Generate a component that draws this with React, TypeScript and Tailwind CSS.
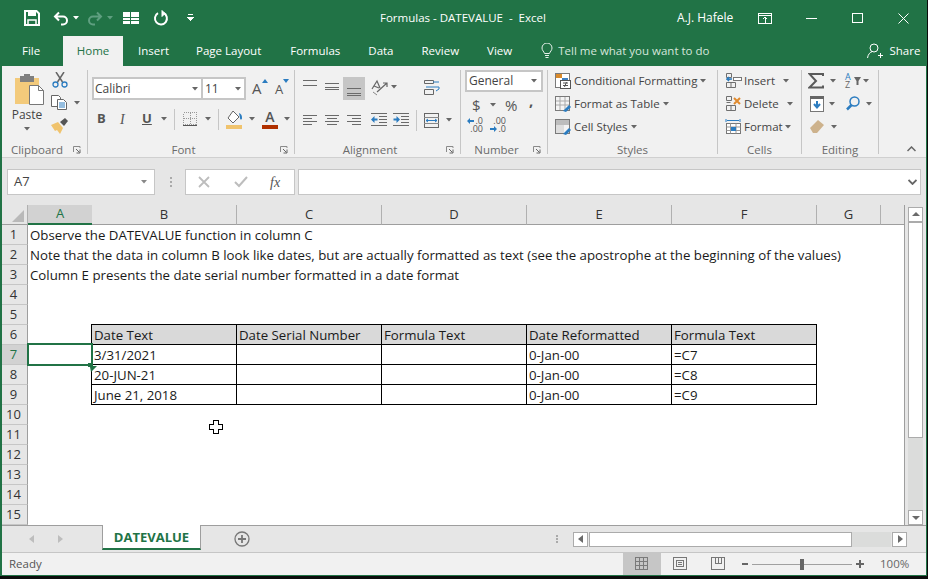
import React from "react";

const G = "#6a6a6a";

function Caret({ className = "", color = "#666" }: { className?: string; color?: string }) {
  return (
    <svg width="6" height="4" viewBox="0 0 6 4" className={"shrink-0 " + className}>
      <path d="M0 0h6L3 3.5z" fill={color} />
    </svg>
  );
}

function Launcher() {
  return (
    <svg width="8" height="8" viewBox="0 0 8 8" className="shrink-0">
      <path d="M0.5 6V0.5H7V2" stroke="#8a8a8a" fill="none" />
      <path d="M3 3l3.5 3.5M7 3.5V7H3.5" stroke="#666" fill="none" />
    </svg>
  );
}

function Group({ label, launcher, className, children }: { label: string; launcher?: boolean; className: string; children: React.ReactNode }) {
  return (
    <div className={"mt-[4px] h-[84px] shrink-0 border-r border-[#c6c6c6] " + className}>
      <div className="flex h-[68px] flex-col">{children}</div>
      <div className="flex h-[24px] items-center text-[11.5px] text-[#6b6b6b]">
        <span className="flex-1 text-center">{label}</span>
        {launcher && (
          <span className="flex w-[15px] justify-start pl-[1px]">
            <Launcher />
          </span>
        )}
      </div>
    </div>
  );
}

function Lines({ rows }: { rows: [number, number, number][] }) {
  return (
    <svg width="16" height="16" viewBox="0 0 16 16" className="shrink-0" shapeRendering="crispEdges">
      {rows.map(([y, a, b], i) => (
        <rect key={i} x={a} y={y} width={b - a} height="1" fill={G} />
      ))}
    </svg>
  );
}

function StyleIcon({ kind }: { kind: number }) {
  return (
    <svg width="16" height="16" viewBox="0 0 16 16" className="shrink-0">
      <rect x="0.5" y="0.5" width="14" height="14" fill={kind === 0 ? "#fff" : "#f4f4f4"} stroke="#7a7a7a" />
      {kind === 0 && (
        <>
          <rect x="1" y="1" width="6" height="4" fill="#d98a2b" />
          <rect x="7" y="5" width="6" height="4" fill="#3d7fc0" />
          <rect x="5.5" y="7.5" width="10" height="8" fill="#fff" stroke="#555" />
          <path d="M8 10h5M8 12.5h5M11.5 9l-2 5" stroke="#555" fill="none" />
        </>
      )}
      {kind === 1 && (
        <>
          <path d="M1 5h13M1 9h13M5 1v13M10 1v13" stroke="#aaa" />
          <path d="M8 15l6-6 2 2-5 5z" fill="#2b7cc0" />
        </>
      )}
      {kind === 2 && (
        <>
          <rect x="1" y="1" width="13" height="5" fill="#bdbdbd" />
          <rect x="1" y="6" width="8" height="8" fill="#dedede" />
          <path d="M8 15l6-6 2 2-5 5z" fill="#2b7cc0" />
        </>
      )}
    </svg>
  );
}

function CellIcon({ kind }: { kind: number }) {
  return (
    <svg width="17" height="17" viewBox="0 0 17 17" className="shrink-0">
      {kind !== 2 ? (
        <>
          <path d="M1.5 1.5h5v4h-5zM1.5 10.5h9v5h-9zM6 10.5v5M1.5 7.5h4" stroke="#6f6f6f" fill="none" />
          {kind === 0 ? (
            <>
              <rect x="8.5" y="5.5" width="8" height="3" fill="#fff" stroke="#777" />
              <path d="M7 7H2M4 5L2 7l2 2" stroke="#2b7cc0" strokeWidth="1.5" fill="none" />
            </>
          ) : (
            <path d="M9 3l6 6M15 3l-6 6" stroke="#e08a2e" strokeWidth="2" />
          )}
        </>
      ) : (
        <>
          <path d="M1 1v3M15 1v3M2 2.5h12" stroke="#2b7cc0" />
          <rect x="1.5" y="5.5" width="14" height="10" fill="#fff" stroke="#777" />
          <path d="M1.5 9h14M1.5 12.5h14M5.5 5.5v10M11 5.5v10" stroke="#999" />
          <rect x="6" y="9" width="5" height="4" fill="#2b7cc0" />
        </>
      )}
    </svg>
  );
}

function TableRow({ n, cells, head, active }: { n: number; cells: string[]; head?: boolean; active?: boolean }) {
  return (
    <div className="flex h-[20px]">
      <RowHead n={n} active={active} />
      <div className="h-[20px] w-[64px] shrink-0 border-r border-black" />
      {cells.map((c, i) => (
        <div
          key={i}
          className={
            "flex h-[20px] w-[145px] shrink-0 items-center whitespace-nowrap border-r border-b border-black pt-[2px] pl-[2px] " +
            (head ? "bg-[#d9d9d9]" : "")
          }
        >
          {c}
        </div>
      ))}
    </div>
  );
}

function RowHead({ n, active }: { n: number; active?: boolean }) {
  return (
    <div
      className={
        "flex h-[20px] w-[26px] shrink-0 items-center justify-center border-r border-b border-r-[#9e9e9e] border-b-[#c6c6c6] pt-[1px] pr-[2px] text-[13px] " +
        (active ? "bg-[#d2d2d2] text-[#217346]" : "bg-[#e6e6e6] text-[#333]")
      }
    >
      {n}
    </div>
  );
}

function ColHead({ label, className, active }: { label: string; className: string; active?: boolean }) {
  return (
    <div
      className={
        className +
        " flex h-[20px] shrink-0 items-center justify-center text-[13px] " +
        (active
          ? "border-b-2 border-b-[#217346] bg-[#d2d2d2] text-[#217346]"
          : "border-r border-b border-r-[#b0b0b0] border-b-[#9e9e9e] text-[#333]")
      }
    >
      {label}
    </div>
  );
}

function TextRow({ n, text }: { n: number; text?: string }) {
  return (
    <div className="flex h-[20px]">
      <RowHead n={n} />
      {text && <div className="flex items-center whitespace-nowrap pt-[2px] pl-[2px]">{text}</div>}
    </div>
  );
}

function ScrollBtn({ dir, className = "" }: { dir: "up" | "down" | "left" | "right"; className?: string }) {
  const d = { up: "M1 6L5 2l4 4z", down: "M1 3h8L5 7z", left: "M7 1v8L2 5z", right: "M3 1v8l5-4z" }[dir];
  return (
    <div className={"flex h-[15px] w-[15px] shrink-0 items-center justify-center border border-[#ababab] bg-white " + className}>
      <svg width="10" height="10" viewBox="0 0 10 10">
        <path d={d} fill="#6a6a6a" />
      </svg>
    </div>
  );
}

export default function App() {
  return (
    <div className="h-[579px] w-[928px] overflow-hidden bg-[#0c0c0c] pr-[1px] pb-[3px] font-['Open_Sans','Noto_Sans',sans-serif]">
      <div className="flex h-[576px] w-[927px] flex-col border-r border-b border-l-2 border-[#217346]">
        {/* Title bar */}
        <div className="flex h-[36px] shrink-0 items-center bg-[#217346] text-[12px] text-white">
          <svg width="16" height="16" viewBox="0 0 16 16" className="ml-[22px] shrink-0">
            <path d="M1 1h11.5L15 3.5V15H1z" fill="none" stroke="#fff" strokeWidth="2" />
            <rect x="4" y="1" width="8" height="5" fill="#fff" />
            <rect x="4" y="10" width="8" height="5" fill="none" stroke="#fff" strokeWidth="1.5" />
          </svg>
          <svg width="16" height="15" viewBox="0 0 16 15" className="ml-[13px] shrink-0">
            <path d="M6 1.5L2 5.5l4 4M2 5.5h8a4 4 0 0 1 0 8H8" fill="none" stroke="#fff" strokeWidth="2" />
          </svg>
          <Caret color="#fff" className="ml-[4px]" />
          <svg width="16" height="15" viewBox="0 0 16 15" className="ml-[8px] shrink-0">
            <path d="M10 1.5l4 4-4 4M14 5.5H6a4 4 0 0 0 0 8h2" fill="none" stroke="#5f9f80" strokeWidth="2" />
          </svg>
          <Caret color="#5f9f80" className="ml-[4px]" />
          <svg width="16" height="12" viewBox="0 0 16 12" className="ml-[10px] shrink-0" shapeRendering="crispEdges">
            <rect x="0" y="0" width="7" height="5" fill="#fff" />
            <rect x="8" y="0" width="8" height="5" fill="#fff" />
            <rect x="0" y="6" width="7" height="6" fill="#fff" />
            <rect x="8" y="6" width="8" height="6" fill="#fff" />
            <rect x="0" y="8" width="7" height="1" fill="#217346" />
            <rect x="8" y="8" width="8" height="1" fill="#217346" />
          </svg>
          <svg width="16" height="16" viewBox="0 0 16 16" className="ml-[14px] shrink-0">
            <path d="M5 3.2A6 6 0 1 0 10.5 3" fill="none" stroke="#fff" strokeWidth="2" />
            <path d="M9 0.5v6l3-3z" fill="#fff" stroke="#fff" />
          </svg>
          <svg width="7" height="8" viewBox="0 0 7 8" className="ml-[18px] shrink-0" shapeRendering="crispEdges">
            <rect x="1" y="0" width="5" height="1" fill="#fff" />
            <path d="M0 3h7L3.5 7z" fill="#fff" />
          </svg>
          <div className="ml-[186px] w-[165px] shrink-0 whitespace-pre text-[11.5px]">Formulas - DATEVALUE  -  Excel</div>
          <div className="ml-[132px] w-[56px] shrink-0 whitespace-nowrap">A.J. Hafele</div>
          <svg width="14" height="11" viewBox="0 0 14 11" className="ml-[25px] shrink-0" shapeRendering="crispEdges">
            <rect x="0.5" y="0.5" width="13" height="10" fill="none" stroke="#fff" />
            <rect x="1" y="2" width="12" height="1" fill="#fff" />
            <path d="M7 4v6M5 6l2-2 2 2" stroke="#fff" fill="none" />
          </svg>
          <div className="ml-[34px] h-px w-[11px] shrink-0 bg-white" />
          <div className="ml-[35px] h-[10px] w-[11px] shrink-0 border border-white" />
          <svg width="11" height="11" viewBox="0 0 11 11" className="ml-[35px] shrink-0">
            <path d="M0.5 0.5l10 10M10.5 0.5l-10 10" stroke="#fff" fill="none" />
          </svg>
        </div>

        {/* Tabs */}
        <div className="flex h-[30px] shrink-0 items-stretch whitespace-nowrap bg-[#217346] text-[11.5px] text-white">
          <div className="ml-[20px] flex w-[18px] shrink-0 items-center">File</div>
          <div className="ml-[23px] flex w-[60px] shrink-0 items-center justify-center bg-[#f1f1f1] text-[#217346]">Home</div>
          <div className="ml-[15px] flex shrink-0 items-center">Insert</div>
          <div className="ml-[27px] flex shrink-0 items-center">Page Layout</div>
          <div className="ml-[29px] flex shrink-0 items-center">Formulas</div>
          <div className="ml-[28px] flex shrink-0 items-center">Data</div>
          <div className="ml-[28px] flex shrink-0 items-center">Review</div>
          <div className="ml-[28px] flex shrink-0 items-center">View</div>
          <svg width="12" height="16" viewBox="0 0 12 16" className="ml-[29px] shrink-0 self-center">
            <path d="M3.5 10.5C3 8.5 1 7.5 1 5a5 5 0 0 1 10 0c0 2.500-2 3.500-2.500 5.500zM4 12.500h4M4.500 14.500h3" fill="none" stroke="#e6f0ea" />
          </svg>
          <div className="ml-[5px] flex shrink-0 items-center text-[#d5e6dc]">Tell me what you want to do</div>
          <svg width="16" height="16" viewBox="0 0 16 16" className="ml-[158px] shrink-0 self-center">
            <circle cx="7" cy="5" r="4" fill="none" stroke="#fff" />
            <path d="M0.500 15c.5-3.500 2.500-6 5-6.500M11 12.500h5M13.500 10v5" fill="none" stroke="#fff" />
          </svg>
          <div className="ml-[6px] flex shrink-0 items-center">Share</div>
        </div>

        {/* Ribbon */}
        <div className="flex h-[92px] shrink-0 border-b border-[#d0d0d0] bg-[#f1f1f1] text-[11.5px] text-[#444]">
          <Group label="Clipboard" launcher className="w-[86px]">
            <div className="flex">
              <div className="ml-[13px] flex w-[28px] flex-col items-center">
                <svg width="29" height="31" viewBox="0 0 29 31" className="mt-[4px] shrink-0">
                  <rect x="0" y="4" width="24" height="26" fill="#f3ca7b" />
                  <rect x="5" y="2" width="14" height="6" fill="#7f7f7f" />
                  <rect x="9" y="0" width="6" height="3" fill="#7f7f7f" />
                  <path d="M14.500 11.500h9l5 5v14h-14z" fill="#fff" stroke="#777" />
                  <path d="M23.500 11.500v5h5" fill="none" stroke="#777" />
                </svg>
                <span className="mt-[2px] mr-[4px] text-[12px] leading-[16px]">Paste</span>
                <Caret className="mt-[4px] mr-[4px]" />
              </div>
              <div className="ml-[8px] flex flex-col">
                <svg width="16" height="16" viewBox="0 0 16 16" className="mt-[2px] ml-[1px]">
                  <path d="M4 0l6.500 10M12 0L5.500 10" stroke="#666" strokeWidth="1.500" fill="none" />
                  <circle cx="3.500" cy="12.500" r="2.500" fill="none" stroke="#2b7cc0" strokeWidth="1.300" />
                  <circle cx="12.500" cy="12.500" r="2.500" fill="none" stroke="#2b7cc0" strokeWidth="1.300" />
                </svg>
                <div className="mt-[7px] flex items-center">
                  <svg width="16" height="15" viewBox="0 0 16 15">
                    <path d="M0.500 0.500h7l2 2v9h-9z" fill="#fff" stroke="#666" />
                    <path d="M6.500 4.500h6l3 3v7h-9z" fill="#fff" stroke="#666" />
                    <path d="M8 8h6M8 10h6M8 12h6" stroke="#2b7cc0" />
                  </svg>
                  <Caret className="ml-[7px]" />
                </div>
                <svg width="17" height="16" viewBox="0 0 17 16" className="mt-[8px]">
                  <path d="M0 7l7-3 5 6-3 6-3-4-2 1z" fill="#f0c36d" />
                  <path d="M9 4l5-4 3 3-4 5z" fill="#555" />
                </svg>
              </div>
            </div>
          </Group>

          <Group label="Font" launcher className="w-[207px]">
            <div className="mt-[7px] flex h-[23px] items-center">
              <div className="ml-[4px] flex h-[23px] w-[111px] items-center border-2 border-[#c6c6c6] bg-white pl-[1px] text-[12px]">
                <span className="flex-1">Calibri</span>
                <Caret className="mr-[3px]" />
              </div>
              <div className="flex h-[23px] w-[43px] items-center border-2 border-l-0 border-[#c6c6c6] bg-white pl-[2px] text-[12px]">
                <span className="flex-1">11</span>
                <Caret className="mr-[3px]" />
              </div>
              <div className="relative ml-[6px] w-[14px] text-[15px] leading-none text-[#555]">
                A
                <svg width="6" height="4" viewBox="0 0 6 4" className="absolute -top-[2px] -right-[2px]">
                  <path d="M0 4h6L3 0z" fill="#2b7cc0" />
                </svg>
              </div>
              <div className="relative ml-[9px] mt-[2px] w-[12px] text-[13px] leading-none text-[#555]">
                A
                <svg width="6" height="4" viewBox="0 0 6 4" className="absolute -top-[4px] -right-[2px]">
                  <path d="M0 0h6L3 4z" fill="#2b7cc0" />
                </svg>
              </div>
            </div>
            <div className="mt-[8px] flex h-[22px] items-center">
              <span className="ml-[9px] w-[10px] text-[13px] font-bold text-[#555]">B</span>
              <span className="ml-[13px] w-[9px] font-['Liberation_Serif',serif] text-[14px] italic text-[#555]">I</span>
              <span className="ml-[13px] w-[10px] text-[13px] font-bold text-[#555] underline">U</span>
              <Caret className="ml-[9px]" />
              <div className="ml-[7px] h-[21px] w-px bg-[#c6c6c6]" />
              <svg width="14" height="14" viewBox="0 0 14 14" className="ml-[8px]" shapeRendering="crispEdges">
                <path d="M0.500 0.500h13v12h-13zM7 0.500v12M0.500 6.500h13" fill="none" stroke="#999" strokeDasharray="1 1" />
                <path d="M0 13h14" stroke="#555" />
              </svg>
              <Caret className="ml-[8px]" />
              <div className="ml-[7px] h-[21px] w-px bg-[#c6c6c6]" />
              <svg width="17" height="19" viewBox="0 0 17 19" className="ml-[7px]">
                <path d="M7 1l6 6-6 6-5-5z" fill="#fff" stroke="#666" />
                <path d="M13 3c2 1 3 2 3 5 0 2-2 2-2 0z" fill="#2b7cc0" />
                <rect x="0" y="15" width="16" height="4" fill="#f0c36d" />
              </svg>
              <Caret className="ml-[6px]" />
              <div className="ml-[7px] flex w-[16px] flex-col items-center">
                <span className="text-[14px] font-semibold leading-[14px] text-[#555]">A</span>
                <div className="mt-[1px] h-[4px] w-[16px] bg-[#b03000]" />
              </div>
              <Caret className="ml-[6px]" />
            </div>
          </Group>

          <Group label="Alignment" launcher className="w-[166px]">
            <div className="flex h-[38px] items-start">
              <div className="ml-[8px] mt-[9px]"><Lines rows={[[1, 0, 14], [6, 0, 14]]} /></div>
              <div className="ml-[6px] mt-[9px]"><Lines rows={[[4, 0, 14], [8, 0, 14], [10, 0, 14]]} /></div>
              <div className="ml-[2px] mt-[7px] flex h-[23px] w-[22px] items-center justify-center bg-[#c6c6c6]">
                <div className="mt-[3px]"><Lines rows={[[6, 1, 15], [11, 1, 15], [13, 1, 15]]} /></div>
              </div>
              <svg width="18" height="17" viewBox="0 0 18 17" className="ml-[6px] mt-[9px]">
                <path d="M1 10l5-8 3 7M3 7l5 2M6 13l10-9M12 4h4v4" fill="none" stroke="#666" strokeWidth="1.200" />
                <path d="M2 13l4 3" stroke="#888" />
              </svg>
              <Caret className="ml-[2px] mt-[15px]" />
              <svg width="16" height="16" viewBox="0 0 16 16" className="ml-[27px] mt-[10px]">
                <path d="M0.500 0.500h9v3h-9zM0.500 9.500h9v5h-9z" fill="none" stroke="#666" />
                <path d="M9 2h6M2 7h13v2l-3 2" stroke="#2b7cc0" fill="none" />
              </svg>
            </div>
            <div className="flex h-[24px] items-center">
              <div className="ml-[8px]"><Lines rows={[[3, 0, 14], [6, 0, 9], [9, 0, 14], [12, 0, 9]]} /></div>
              <div className="ml-[6px]"><Lines rows={[[3, 0, 14], [6, 2, 12], [9, 0, 14], [12, 2, 12]]} /></div>
              <div className="ml-[6px]"><Lines rows={[[3, 0, 14], [6, 5, 14], [9, 0, 14], [12, 5, 14]]} /></div>
              <svg width="16" height="14" viewBox="0 0 16 14" className="ml-[8px]" shapeRendering="crispEdges">
                <path d="M0 0.500h16M8 3.500h8M8 6.500h8M8 9.500h8M0 12.500h16" stroke={G} />
                <path d="M0 6.500l3.500-3.500v2.500h3v2h-3v2.500z" fill="#2b7cc0" shapeRendering="auto" />
              </svg>
              <svg width="16" height="14" viewBox="0 0 16 14" className="ml-[6px]" shapeRendering="crispEdges">
                <path d="M0 0.500h16M8 3.500h8M8 6.500h8M8 9.500h8M0 12.500h16" stroke={G} />
                <path d="M7 6.500l-3.500-3.500v2.500h-3v2h3v2.500z" fill="#2b7cc0" shapeRendering="auto" />
              </svg>
              <div className="ml-[7px] h-[21px] w-px bg-[#c6c6c6]" />
              <svg width="15" height="15" viewBox="0 0 15 15" className="ml-[7px]">
                <rect x="0.500" y="0.500" width="14" height="14" fill="none" stroke="#666" />
                <path d="M0 4.500h15M0 10.500h15" stroke="#888" />
                <path d="M2 7.500h11M4 6L2 7.500 4 9M11 6l2 1.500L11 9" stroke="#2b7cc0" fill="none" />
              </svg>
              <Caret className="ml-[7px]" />
            </div>
          </Group>

          <Group label="Number" launcher className="w-[87px]">
            <div className="ml-[4px] flex h-[22px] w-[78px] shrink-0 items-center border-2 border-[#c6c6c6] bg-white pl-[2px] text-[12px]">
              <span className="flex-1">General</span>
              <Caret className="mr-[4px]" />
            </div>
            <div className="mt-[3px] flex h-[20px] items-center text-[15px] text-[#555]">
              <span className="ml-[11px] w-[9px] leading-none">$</span>
              <Caret className="ml-[9px]" />
              <span className="ml-[9px] w-[15px] leading-none">%</span>
              <span className="ml-[9px] mb-[10px] text-[15px] font-bold leading-none">,</span>
            </div>
            <div className="mt-[1px] flex h-[18px] items-center">
              <div className="ml-[6px] flex w-[16px] flex-col text-[9px] leading-[8px] text-[#555]">
                <span className="flex items-center justify-end gap-px">
                  <svg width="7" height="6" viewBox="0 0 7 6"><path d="M0 3l3-3v2h4v2H3v2z" fill="#2b7cc0" /></svg>.0
                </span>
                <span className="text-right">.00</span>
              </div>
              <div className="ml-[7px] flex w-[16px] flex-col text-[9px] leading-[8px] text-[#555]">
                <span className="text-right">.00</span>
                <span className="flex items-center justify-end gap-px">
                  <svg width="7" height="6" viewBox="0 0 7 6"><path d="M7 3L4 0v2H0v2h4v2z" fill="#2b7cc0" /></svg>.0
                </span>
              </div>
            </div>
          </Group>

          <Group label="Styles" className="w-[170px]">
            <div className="ml-[7px] -mt-[1px] flex h-[23px] shrink-0 items-center whitespace-nowrap">
              <StyleIcon kind={0} />
              <span className="ml-[3px]">Conditional Formatting</span>
              <Caret className="ml-[3px]" />
            </div>
            <div className="ml-[7px] flex h-[23px] shrink-0 items-center whitespace-nowrap">
              <StyleIcon kind={1} />
              <span className="ml-[3px]">Format as Table</span>
              <Caret className="ml-[3px]" />
            </div>
            <div className="ml-[7px] flex h-[23px] shrink-0 items-center whitespace-nowrap">
              <StyleIcon kind={2} />
              <span className="ml-[3px]">Cell Styles</span>
              <Caret className="ml-[3px]" />
            </div>
          </Group>

          <Group label="Cells" className="w-[84px]">
            <div className="ml-[7px] -mt-[1px] flex h-[23px] shrink-0 items-center whitespace-nowrap">
              <CellIcon kind={0} />
              <span className="ml-[2px] w-[39px]">Insert</span>
              <Caret />
            </div>
            <div className="ml-[7px] flex h-[23px] shrink-0 items-center whitespace-nowrap">
              <CellIcon kind={1} />
              <span className="ml-[2px] w-[43px]">Delete</span>
              <Caret />
            </div>
            <div className="ml-[7px] flex h-[23px] shrink-0 items-center whitespace-nowrap">
              <CellIcon kind={2} />
              <span className="ml-[2px] w-[41px]">Format</span>
              <Caret />
            </div>
          </Group>

          <Group label="Editing" className="w-[77px]">
            <div className="-mt-[1px] flex h-[23px] shrink-0 items-center">
              <svg width="16" height="16" viewBox="0 0 16 16" className="ml-[6px]">
                <path d="M15 3V1H1.500l6.500 7-6.500 6.500H15v-2" fill="none" stroke="#5a5a5a" strokeWidth="2" />
              </svg>
              <Caret className="ml-[6px]" />
              <div className="ml-[9px] flex w-[13px] flex-col text-[9px] leading-[8px]">
                <span className="text-[#2b7cc0]">A</span>
                <span className="text-[#666]">Z</span>
              </div>
              <svg width="7" height="8" viewBox="0 0 7 8" className="-ml-[4px]"><path d="M0 0h7L4.500 4v4h-2V4z" fill="#666" /></svg>
              <Caret className="ml-[2px]" />
            </div>
            <div className="flex h-[23px] shrink-0 items-center">
              <svg width="14" height="16" viewBox="0 0 14 16" className="ml-[8px]">
                <rect x="0.500" y="0.500" width="13" height="15" fill="#fff" stroke="#777" />
                <rect x="0" y="0" width="14" height="3" fill="#666" />
                <path d="M7 5v6M4 8l3 3.500L10 8" fill="none" stroke="#2b7cc0" strokeWidth="2" />
              </svg>
              <Caret className="ml-[5px]" />
              <svg width="14" height="15" viewBox="0 0 14 15" className="ml-[11px]">
                <circle cx="8.500" cy="5.500" r="4.500" fill="none" stroke="#2b7cc0" strokeWidth="1.500" />
                <path d="M5.500 9L1 13.500" stroke="#2b7cc0" strokeWidth="2.500" />
              </svg>
              <Caret className="ml-[6px]" />
            </div>
            <div className="flex h-[23px] shrink-0 items-center">
              <svg width="14" height="13" viewBox="0 0 14 13" className="ml-[8px]">
                <path d="M0 8l8-8 6 5-7 8H3z" fill="#cdb28c" />
              </svg>
              <Caret className="ml-[7px]" />
            </div>
          </Group>

          <div className="flex flex-1 items-end justify-end pr-[10px] pb-[5px]">
            <svg width="9" height="6" viewBox="0 0 9 6">
              <path d="M0.500 5L4.500 1l4 4" fill="none" stroke="#666" strokeWidth="1.500" />
            </svg>
          </div>
        </div>

        {/* Formula bar */}
        <div className="flex h-[47px] shrink-0 items-center bg-[#e6e6e6] pt-[1px] text-[13px] text-[#444]">
          <div className="ml-[5px] flex h-[26px] w-[148px] items-center border border-[#c6c6c6] bg-white pl-[6px]">
            <span className="flex-1">A7</span>
            <Caret className="mr-[7px]" color="#888" />
          </div>
          <div className="ml-[15px] flex flex-col gap-[2px]">
            <div className="h-[2px] w-[2px] bg-[#aaa]" />
            <div className="h-[2px] w-[2px] bg-[#aaa]" />
            <div className="h-[2px] w-[2px] bg-[#aaa]" />
          </div>
          <div className="ml-[13px] flex h-[26px] w-[110px] items-center border border-[#c6c6c6] bg-white">
            <svg width="12" height="12" viewBox="0 0 12 12" className="ml-[12px]">
              <path d="M1 1l10 10M11 1L1 11" stroke="#bdbdbd" strokeWidth="1.800" />
            </svg>
            <svg width="14" height="12" viewBox="0 0 14 12" className="ml-[24px]">
              <path d="M1 6l4 4 8-9" fill="none" stroke="#bdbdbd" strokeWidth="2" />
            </svg>
            <span className="ml-[22px] font-['Liberation_Serif',serif] text-[14px] italic text-[#555]">fx</span>
          </div>
          <div className="ml-[3px] flex h-[26px] w-[623px] items-center justify-end border border-[#c6c6c6] bg-white pr-[3px]">
            <svg width="9" height="6" viewBox="0 0 9 6">
              <path d="M0.500 1L4.500 5l4-4" fill="none" stroke="#666" strokeWidth="1.800" />
            </svg>
          </div>
        </div>

        {/* Sheet */}
        <div className="flex h-[320px] shrink-0 bg-[#e6e6e6]">
          <div className="w-[903px] shrink-0">
            <div className="flex h-[20px]">
              <div className="flex h-[20px] w-[26px] shrink-0 items-end justify-end border-r border-b border-r-[#b0b0b0] border-b-[#9e9e9e] pr-[3px] pb-[2px]">
                <svg width="12" height="12" viewBox="0 0 12 12"><path d="M12 0v12H0z" fill="#b9b9b9" /></svg>
              </div>
              <ColHead label="A" active className="w-[64px]" />
              <ColHead label="B" className="w-[145px]" />
              <ColHead label="C" className="w-[145px]" />
              <ColHead label="D" className="w-[145px]" />
              <ColHead label="E" className="w-[145px]" />
              <ColHead label="F" className="w-[145px]" />
              <ColHead label="G" className="w-[64px]" />
              <div className="h-[20px] flex-1 border-r border-b border-r-[#9e9e9e] border-b-[#9e9e9e]" />
            </div>
            <div className="relative h-[300px] overflow-hidden border-r border-[#9e9e9e] bg-white text-[13.25px] text-[#1a1a1a]">
              <TextRow n={1} text="Observe the DATEVALUE function in column C" />
              <TextRow n={2} text="Note that the data in column B look like dates, but are actually formatted as text (see the apostrophe at the beginning of the values)" />
              <TextRow n={3} text="Column E presents the date serial number formatted in a date format" />
              <TextRow n={4} />
              <div className="flex h-[20px]">
                <RowHead n={5} />
                <div className="ml-[63px] h-[20px] w-[726px] border-b border-black" />
              </div>
              <TableRow n={6} head cells={["Date Text", "Date Serial Number", "Formula Text", "Date Reformatted", "Formula Text"]} />
              <TableRow n={7} active cells={["3/31/2021", "", "", "0-Jan-00", "=C7"]} />
              <TableRow n={8} cells={["20-JUN-21", "", "", "0-Jan-00", "=C8"]} />
              <TableRow n={9} cells={["June 21, 2018", "", "", "0-Jan-00", "=C9"]} />
              <TextRow n={10} />
              <TextRow n={11} />
              <TextRow n={12} />
              <TextRow n={13} />
              <TextRow n={14} />
              <TextRow n={15} />
              {/* active-cell selection */}
              <div className="absolute top-[118px] left-[25px] h-[23px] w-[66px] border-2 border-[#217346]" />
              <svg width="10" height="10" viewBox="0 0 10 10" className="absolute top-[138px] left-[86px]">
                <path d="M0 0h5v3h4L3 9 2 4H0z" fill="#217346" />
              </svg>
              {/* mouse pointer */}
              <svg width="14" height="14" viewBox="0 0 14 14" className="absolute top-[195px] left-[207px]" shapeRendering="crispEdges">
                <path d="M4.500 0.500h5v4h4v5h-4v4h-5v-4h-4v-5h4z" fill="#fff" stroke="#000" />
              </svg>
            </div>
          </div>
          <div className="flex w-[21px] shrink-0 flex-col pt-[2px] pl-[3px]">
            <ScrollBtn dir="up" />
            <div className="flex w-[15px] flex-1 flex-col bg-[#dbdcdb]">
              <div className="h-[216px] border border-[#ababab] bg-white" />
            </div>
            <ScrollBtn dir="down" />
          </div>
        </div>

        {/* Sheet tabs */}
        <div className="flex h-[28px] shrink-0 items-start border-b border-[#c6c6c6] bg-[#e6e6e6]">
          <div className="flex h-[27px] w-[100px] shrink-0 items-center border-t border-[#9e9e9e]">
            <svg width="5" height="8" viewBox="0 0 5 8" className="ml-[27px]"><path d="M5 0v8L0 4z" fill="#bdbdbd" /></svg>
            <svg width="5" height="8" viewBox="0 0 5 8" className="ml-[24px]"><path d="M0 0v8l5-4z" fill="#bdbdbd" /></svg>
          </div>
          <div className="flex h-[25px] w-[99px] shrink-0 items-center justify-center border-r border-l border-[#9e9e9e] border-b-2 border-b-[#217346] bg-white pt-[2px] text-[13px] font-bold text-[#217346]">
            DATEVALUE
          </div>
          <div className="flex h-[27px] flex-1 items-center border-t border-[#9e9e9e]">
            <svg width="16" height="16" viewBox="0 0 16 16" className="ml-[33px] shrink-0">
              <circle cx="8" cy="8" r="7" fill="none" stroke="#777" strokeWidth="1.300" />
              <path d="M8 4v8M4 8h8" stroke="#777" strokeWidth="1.800" />
            </svg>
            <div className="ml-[306px] flex flex-col gap-[1px]">
              <div className="h-[2px] w-[2px] bg-[#aaa]" />
              <div className="h-[2px] w-[2px] bg-[#aaa]" />
              <div className="h-[2px] w-[2px] bg-[#aaa]" />
            </div>
            <ScrollBtn dir="left" className="ml-[15px]" />
            <div className="ml-px flex h-[15px] w-[302px] bg-[#dbdcdb]">
              <div className="h-[15px] w-[263px] border border-[#ababab] bg-white" />
            </div>
            <ScrollBtn dir="right" className="ml-px" />
          </div>
        </div>

        {/* Status bar */}
        <div className="flex h-[22px] flex-1 items-stretch bg-[#f1f1f1] text-[11.5px] text-[#555]">
          <span className="ml-[7px] flex w-[40px] shrink-0 items-center">Ready</span>
          <div className="ml-[574px] flex w-[38px] shrink-0 items-center justify-center bg-[#c6c6c6]">
            <svg width="14" height="14" viewBox="0 0 14 14" shapeRendering="crispEdges">
              <path d="M0.500 0.500h12v12h-12zM4.500 0.500v12M8.500 0.500v12M0.500 4.500h12M0.500 8.500h12" fill="none" stroke="#7a7a7a" />
            </svg>
          </div>
          <div className="flex w-[38px] shrink-0 items-center justify-center">
            <svg width="14" height="14" viewBox="0 0 14 14" shapeRendering="crispEdges">
              <path d="M0.500 0.500h13v12h-13zM3.500 3.500h7v6h-7zM5 5.500h4M5 7.500h4" fill="none" stroke="#777" />
            </svg>
          </div>
          <div className="flex w-[38px] shrink-0 items-center justify-center">
            <svg width="14" height="14" viewBox="0 0 14 14" shapeRendering="crispEdges">
              <path d="M0.500 0.500h13v12h-13zM4.500 0.500v6h6v-6M7.500 0.500v6" fill="none" stroke="#777" />
            </svg>
          </div>
          <div className="ml-[5px] flex shrink-0 items-center">
            <div className="h-[2px] w-[6px] bg-[#666]" />
            <div className="relative ml-[4px] flex h-[12px] w-[100px] items-center">
              <div className="h-px w-full bg-[#a0a0a0]" />
              <div className="absolute left-[48px] h-[11px] w-[4px] bg-[#666]" />
            </div>
            <svg width="8" height="8" viewBox="0 0 8 8" className="ml-[4px]" shapeRendering="crispEdges">
              <path d="M3 0h2v3h3v2H5v3H3V5H0V3h3z" fill="#666" />
            </svg>
          </div>
          <span className="ml-[16px] flex shrink-0 items-center text-[#666]">100%</span>
        </div>
      </div>
    </div>
  );
}
